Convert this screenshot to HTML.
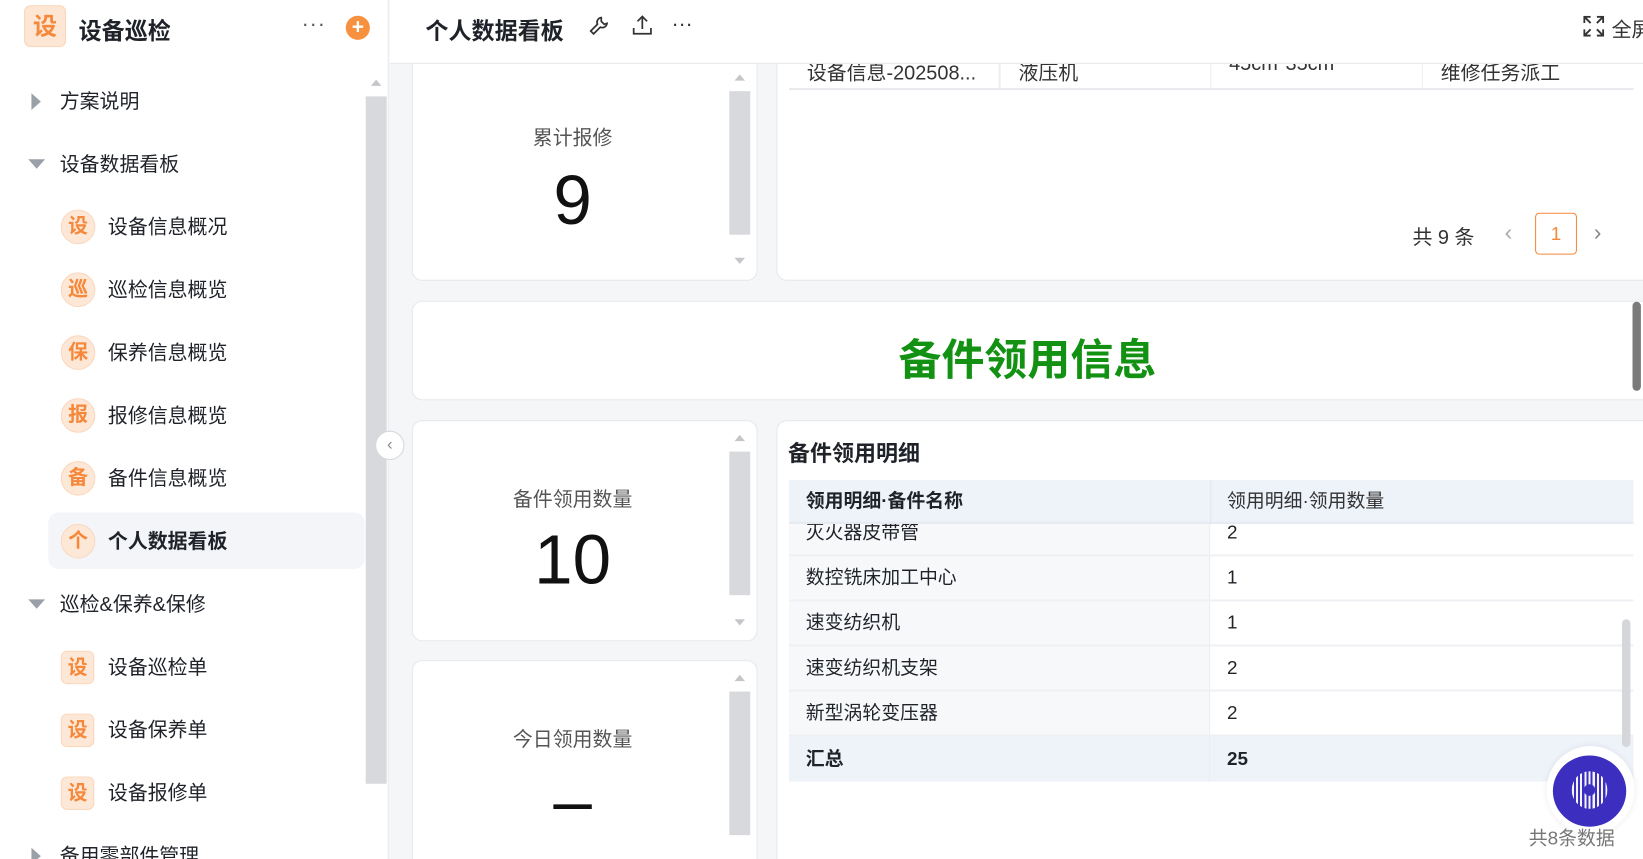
<!DOCTYPE html>
<html><head><meta charset="utf-8"><style>
*{box-sizing:border-box;margin:0;padding:0}
html,body{width:1643px;height:859px;overflow:hidden;background:#fff}
#w{position:absolute;left:0;top:0;width:1568px;height:820px;transform:scale(1.04783);transform-origin:0 0;font-family:"Liberation Sans","Noto Sans CJK SC",sans-serif;color:#1f2329;overflow:hidden;background:#f5f6f8}
.a{position:absolute;white-space:nowrap}
.side{left:0;top:0;width:371px;height:820px;background:#fff;border-right:1px solid #e8eaee}
.mi{position:absolute;left:57px;font-size:19px;line-height:24px;color:#1f2329}
.si{position:absolute;left:103px;font-size:19px;line-height:24px}
.ic{position:absolute;left:58px;width:33px;height:33px;border-radius:50%;background:#fde8d8;border:1px solid #fbd7bd;color:#f5883a;font-weight:bold;font-size:19px;text-align:center;line-height:31px}
.sq{border-radius:6px;width:32px;height:32px}
.tri{position:absolute;left:27px;width:0;height:0;border-left:8px solid transparent;border-right:8px solid transparent;border-top:9px solid #9aa0a8}
.trr{position:absolute;left:30px;width:0;height:0;border-top:8px solid transparent;border-bottom:8px solid transparent;border-left:9px solid #9aa0a8}
.card{position:absolute;background:#fff;border:1px solid #e6e8ec;border-radius:10px}
.lab{position:absolute;left:0;width:305px;text-align:center;font-size:19px;color:#555}
.big{position:absolute;left:0;width:305px;text-align:center;font-size:66px;color:#111;line-height:70px}
.sb{position:absolute;left:302px;width:20px;background:#d8d9dc}
.ua{position:absolute;left:307px;width:0;height:0;border-left:5px solid transparent;border-right:5px solid transparent}
.r{position:absolute;left:0;width:806px;height:43px;border-bottom:2px solid #eef0f3;font-size:18px}
.r .c1{position:absolute;left:0;top:0;width:402px;height:41px;background:#f7f8fa;border-right:1px solid #e9ecf0;padding-left:16px;line-height:41px}
.r .c2{position:absolute;left:402px;top:0;width:404px;height:41px;background:#fff;padding-left:16px;line-height:41px}
</style></head><body><div id="w">
<div class="a side">
 <div class="a" style="left:23px;top:5px;width:40px;height:40px;border-radius:6px;background:#fde6d4;border:1px solid #fbd5b8;color:#f5883a;font-weight:bold;font-size:23px;text-align:center;line-height:38px">设</div>
 <div class="a" style="left:75px;top:12px;font-size:22px;font-weight:bold">设备巡检</div>
 <div class="a" style="left:288px;top:12px;font-size:20px;color:#555;letter-spacing:1px">···</div>
 <div class="a" style="left:330px;top:15px;width:23px;height:23px;border-radius:50%;background:#f7913d;color:#fff;text-align:center;line-height:22px;font-size:20px;font-weight:bold">+</div>
 <div class="trr" style="top:89px"></div><div class="mi" style="top:86px">方案说明</div>
 <div class="tri" style="top:152px"></div><div class="mi" style="top:146px">设备数据看板</div>
 <div class="ic" style="top:200px">设</div><div class="si" style="top:206px">设备信息概况</div>
 <div class="ic" style="top:260px">巡</div><div class="si" style="top:266px">巡检信息概览</div>
 <div class="ic" style="top:320px">保</div><div class="si" style="top:326px">保养信息概览</div>
 <div class="ic" style="top:380px">报</div><div class="si" style="top:386px">报修信息概览</div>
 <div class="ic" style="top:440px">备</div><div class="si" style="top:446px">备件信息概览</div>
 <div class="a" style="left:46px;top:489px;width:302px;height:54px;background:#f3f5f8;border-radius:10px"></div>
 <div class="ic" style="top:500px">个</div><div class="si" style="top:506px;font-weight:bold">个人数据看板</div>
 <div class="tri" style="top:572px"></div><div class="mi" style="top:566px">巡检&amp;保养&amp;保修</div>
 <div class="ic sq" style="top:621px">设</div><div class="si" style="top:626px">设备巡检单</div>
 <div class="ic sq" style="top:681px">设</div><div class="si" style="top:686px">设备保养单</div>
 <div class="ic sq" style="top:741px">设</div><div class="si" style="top:746px">设备报修单</div>
 <div class="trr" style="top:809px"></div><div class="mi" style="top:806px">备用零部件管理</div>
 <div class="a" style="left:349px;top:92px;width:20px;height:656px;background:#d8d9dc"></div>
 <div class="a" style="left:354px;top:76px;border-left:5px solid transparent;border-right:5px solid transparent;border-bottom:6px solid #c4c6ca"></div>
</div>
<div class="a" style="left:358px;top:411px;width:28px;height:28px;border-radius:50%;background:#fff;border:1px solid #d5d8dd;color:#888;text-align:center;line-height:25px;font-size:16px">‹</div>

<div class="card" style="left:393px;top:40px;width:330px;height:228px">
 <div class="lab" style="top:76px">累计报修</div><div class="big" style="top:115px">9</div>
 <div class="sb" style="top:46px;height:137px"></div>
 <div class="ua" style="top:30px;border-bottom:6px solid #c4c6ca"></div><div class="ua" style="top:205px;border-top:6px solid #c4c6ca"></div>
</div>
<div class="card" style="left:741px;top:40px;width:840px;height:228px">
 <div class="a" style="left:11px;top:5px;width:806px;height:40px;border-bottom:2px solid #e8eaee;font-size:19px;color:#333">
  <span class="a" style="left:17px;top:9px">设备信息-202508...</span><span class="a" style="left:200px;top:0;height:40px;border-left:2px solid #eceef2"></span>
  <span class="a" style="left:219px;top:9px">液压机</span><span class="a" style="left:402px;top:0;height:40px;border-left:1px solid #eceef2"></span>
  <span class="a" style="left:420px;top:5px">45cm*35cm</span><span class="a" style="left:604px;top:0;height:40px;border-left:1px solid #eceef2"></span>
  <span class="a" style="left:622px;top:9px">维修任务派工</span>
 </div>
 <div class="a" style="left:606px;top:171px;font-size:19px;color:#333">共 9 条</div>
 <div class="a" style="left:694px;top:168px;font-size:22px;color:#aaa">‹</div>
 <div class="a" style="left:723px;top:162px;width:40px;height:40px;border:1px solid #f5883a;border-radius:4px;color:#f5883a;text-align:center;line-height:38px;font-size:18px">1</div>
 <div class="a" style="left:779px;top:168px;font-size:22px;color:#888">›</div>
</div>
<div class="a" style="left:372px;top:0;width:1196px;height:61px;background:#fff;border-bottom:1px solid #e6e8ec"></div>
<div class="a" style="left:406px;top:12px;font-size:22px;font-weight:bold">个人数据看板</div>
<svg class="a" style="left:561px;top:14px" width="22" height="22" viewBox="0 0 24 24" fill="none" stroke="#333" stroke-width="1.8"><path d="M14 3a5 5 0 0 0-4 7l-7 7 3 3 7-7a5 5 0 0 0 7-4l-3 1-3-3z"/></svg>
<svg class="a" style="left:602px;top:13px" width="22" height="22" viewBox="0 0 24 24" fill="none" stroke="#333" stroke-width="1.8"><path d="M12 16V3M7 8l5-5 5 5M3 15v6h18v-6"/></svg>
<div class="a" style="left:641px;top:12px;font-size:20px;color:#333">···</div>
<svg class="a" style="left:1511px;top:15px" width="20" height="20" viewBox="0 0 20 20" fill="none" stroke="#333" stroke-width="1.8"><path d="M1 7V1h6M13 1h6v6M19 13v6h-6M7 19H1v-6M2 2l5 5M18 2l-5 5M18 18l-5-5M2 18l5-5"/></svg>
<div class="a" style="left:1538px;top:14px;font-size:19px;color:#333">全屏</div>

<div class="card" style="left:393px;top:287px;width:1190px;height:95px"></div>
<div class="a" style="left:393px;top:310px;width:1175px;text-align:center;font-size:41px;font-weight:bold;color:#139113">备件领用信息</div>
<div class="a" style="left:1558px;top:288px;width:8px;height:85px;border-radius:4px;background:#7a7a7a"></div>

<div class="card" style="left:393px;top:401px;width:330px;height:211px">
 <div class="lab" style="top:60px">备件领用数量</div><div class="big" style="top:97px">10</div>
 <div class="sb" style="top:29px;height:137px"></div>
 <div class="ua" style="top:13px;border-bottom:6px solid #c4c6ca"></div><div class="ua" style="top:189px;border-top:6px solid #c4c6ca"></div>
</div>
<div class="card" style="left:393px;top:630px;width:330px;height:200px">
 <div class="lab" style="top:60px">今日领用数量</div><div class="big" style="top:98px">–</div>
 <div class="sb" style="top:29px;height:137px"></div>
 <div class="ua" style="top:13px;border-bottom:6px solid #c4c6ca"></div>
</div>
<div class="card" style="left:741px;top:401px;width:840px;height:430px">
 <div class="a" style="left:10px;top:15px;font-size:21px;font-weight:bold">备件领用明细</div>
 <div class="a" style="left:11px;top:56px;width:806px;height:288px;overflow:hidden">
  <div class="r" style="top:30px"><div class="c1">灭火器皮带管</div><div class="c2">2</div></div>
  <div class="r" style="top:73px"><div class="c1">数控铣床加工中心</div><div class="c2">1</div></div>
  <div class="r" style="top:116px"><div class="c1">速变纺织机</div><div class="c2">1</div></div>
  <div class="r" style="top:159px"><div class="c1">速变纺织机支架</div><div class="c2">2</div></div>
  <div class="r" style="top:202px"><div class="c1">新型涡轮变压器</div><div class="c2">2</div></div>
  <div class="r" style="top:245px;border:none"><div class="c1" style="background:#eef2f9;font-weight:bold;height:43px;line-height:43px">汇总</div><div class="c2" style="background:#eef2f9;font-weight:bold;height:43px;line-height:43px">25</div></div>
  <div class="a" style="left:0;top:0;width:806px;height:42px;background:#eef2f9;border-bottom:2px solid #e6eaf2;font-size:18px;line-height:40px">
   <span class="a" style="left:16px;font-weight:bold">领用明细·备件名称</span>
   <span class="a" style="left:402px;top:0;height:42px;border-left:1px solid #e2e6ee"></span>
   <span class="a" style="left:418px;color:#333">领用明细·领用数量</span>
  </div>
 </div>
 <div class="a" style="left:806px;top:189px;width:8px;height:122px;border-radius:4px;background:#d4d6da"></div>
</div>
<div class="a" style="left:1476px;top:712px;width:84px;height:84px;border-radius:50%;background:#fff;box-shadow:0 0 6px rgba(0,0,0,.08)"></div>
<div class="a" style="left:1482px;top:721px;width:70px;height:68px;border-radius:50%;background:#3c2fc0"></div>
<div class="a" style="left:1500px;top:736px;width:34px;height:36px;border-radius:50%;background:radial-gradient(circle,#3c2fc0 0 5px,transparent 6px),repeating-linear-gradient(90deg,#fff 0 2px,transparent 2px 4px);opacity:.95"></div>
<div class="a" style="left:1459px;top:786px;font-size:18px;color:#777">共8条数据</div>
</div></body></html>
